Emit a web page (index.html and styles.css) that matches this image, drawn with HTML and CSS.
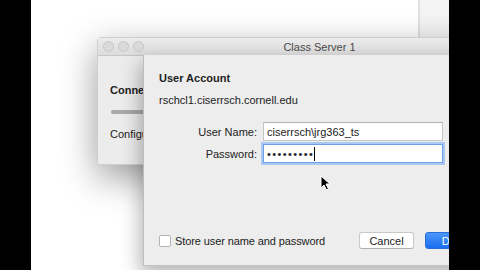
FILE: index.html
```html
<!DOCTYPE html>
<html lang="en">
<head>
    <meta charset="UTF-8">
    <meta name="viewport" content="width=device-width, initial-scale=1.0">
    <title>Class Server 1 - User Account</title>
    <link rel="stylesheet" href="styles.css">
</head>
<body>
    <div class="screen">
        <div class="back-strip"></div>

        <div class="window">
            <div class="titlebar">
                <div class="lights"><span></span><span></span><span></span></div>
                <div class="title">Class Server 1</div>
            </div>
            <div class="win-body">
                <div class="win-heading">Connecting</div>
                <div class="progress"></div>
                <div class="win-text">Configuring</div>
            </div>
        </div>

        <div class="sheet">
            <div class="sheet-title">User Account</div>
            <div class="sheet-host">rschcl1.ciserrsch.cornell.edu</div>

            <div class="form">
                <label class="form-label">User Name:</label>
                <div class="field">ciserrsch\jrg363_ts</div>
                <label class="form-label">Password:</label>
                <div class="field focus"><span class="dots">&bull;&bull;&bull;&bull;&bull;&bull;&bull;&bull;&bull;</span><span class="caret"></span></div>
            </div>

            <div class="sheet-footer">
                <label class="check"><span class="box"></span>Store user name and password</label>
                <div class="buttons">
                    <button class="btn">Cancel</button>
                    <button class="btn primary">Done</button>
                </div>
            </div>
        </div>

        <svg class="cursor" width="11" height="16" viewBox="0 0 11 16">
            <path d="M1 1 L1 13 L4 10 L6.5 15 L8.5 14 L6 9 L10 9 Z" fill="#000" stroke="#fff" stroke-width="1"/>
        </svg>
    </div>
</body>
</html>
```

FILE: styles.css
```css
* {
    margin: 0;
    padding: 0;
    box-sizing: border-box;
}

body {
    background: #000;
    width: 480px;
    height: 270px;
    overflow: hidden;
    font-family: 'Liberation Sans', Arial, sans-serif;
    font-size: 11px;
    color: #222;
}

.screen {
    position: relative;
    margin-left: 31px;
    width: 418px;
    height: 270px;
    background: #fff;
    overflow: hidden;
}

.back-strip {
    position: absolute;
    left: 387px;
    top: 0;
    width: 31px;
    height: 37px;
    background: #f4f4f4;
    border-left: 2px solid #e0e0e0;
}

/* main window */
.window {
    position: absolute;
    left: 66px;
    top: 37px;
    width: 445px;
    height: 128px;
    background: #ececec;
    border: 1px solid #cfcfcf;
    border-radius: 4px 4px 0 0;
    box-shadow: 0 12px 36px rgba(0, 0, 0, 0.4);
}

.titlebar {
    position: relative;
    height: 18px;
    display: flex;
    align-items: center;
    justify-content: center;
    background: linear-gradient(#ebebeb, #dcdcdc);
    border-bottom: 1px solid #c6c6c6;
}

.lights {
    position: absolute;
    left: 5px;
    top: 3px;
    display: flex;
    gap: 4px;
}

.lights span {
    width: 11px;
    height: 11px;
    border-radius: 50%;
    background: #dadada;
    border: 1px solid #c8c8c8;
}

.title {
    color: #4a4a4a;
    font-size: 11px;
}

.win-body {
    width: 46px;
    overflow: hidden;
    padding: 27px 0 0 12px;
}

.win-heading {
    font-weight: bold;
    line-height: 14px;
    white-space: nowrap;
}

.progress {
    margin: 13px 0 0 1px;
    width: 200px;
    height: 4px;
    border-radius: 2px;
    background: #a9a9a9;
}

.win-text {
    margin-top: 13px;
    line-height: 14px;
    white-space: nowrap;
}

/* sheet */
.sheet {
    position: absolute;
    left: 112px;
    top: 55px;
    width: 360px;
    height: 211px;
    display: flex;
    flex-direction: column;
    padding: 16px 18px 16px 15px;
    background: #ededed;
    border-left: 1px solid #bdbdbd;
    border-bottom: 1px solid #c4c4c4;
    box-shadow: -3px 8px 18px rgba(0, 0, 0, 0.3);
}

.sheet-title {
    font-weight: bold;
    line-height: 14px;
}

.sheet-host {
    margin-top: 8px;
    line-height: 14px;
}

.form {
    display: grid;
    grid-template-columns: 98px 180px;
    column-gap: 6px;
    row-gap: 3px;
    margin-top: 15px;
    align-items: center;
}

.form-label {
    text-align: right;
}

.field {
    height: 19px;
    display: flex;
    align-items: center;
    padding-left: 3px;
    background: #fff;
    border: 1px solid #c6c6c6;
    border-top-color: #b4b4b4;
}

.field.focus {
    border-color: #6e9fe6;
    box-shadow: 0 0 0 2px #a9c8f2;
}

.dots {
    letter-spacing: 1.4px;
    font-size: 11px;
}

.caret {
    width: 1px;
    height: 14px;
    background: #000;
}

.sheet-footer {
    margin-top: auto;
    display: flex;
    align-items: center;
    justify-content: space-between;
}

.check {
    display: flex;
    align-items: center;
    gap: 4px;
    letter-spacing: -0.1px;
}

.box {
    width: 12px;
    height: 12px;
    background: #fff;
    border: 1px solid #b3b3b3;
    border-radius: 2px;
}

.buttons {
    display: flex;
    gap: 11px;
}

.btn {
    height: 17px;
    width: 55px;
    font-family: inherit;
    font-size: 11px;
    color: #222;
    background: #fff;
    border: 1px solid #c8c8c8;
    border-bottom-color: #b0b0b0;
    border-radius: 3px;
}

.btn.primary {
    width: 60px;
    color: #fff;
    background: linear-gradient(#4b97fa, #1a6ef0);
    border-color: #2a6fd8;
}

.cursor {
    position: absolute;
    left: 289px;
    top: 175px;
}
```
